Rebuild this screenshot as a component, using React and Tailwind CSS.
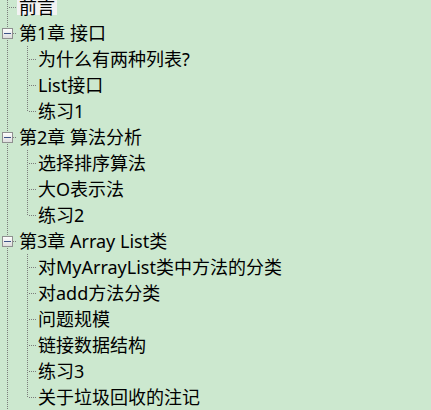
import React from 'react';

const rows = [
  { level: 1, label: '前言', selected: true },
  { level: 1, label: '第1章 接口', open: true },
  { level: 2, label: '为什么有两种列表?' },
  { level: 2, label: 'List接口' },
  { level: 2, label: '练习1', last: true },
  { level: 1, label: '第2章 算法分析', open: true },
  { level: 2, label: '选择排序算法' },
  { level: 2, label: '大O表示法' },
  { level: 2, label: '练习2', last: true },
  { level: 1, label: '第3章 Array List类', open: true },
  { level: 2, label: '对MyArrayList类中方法的分类' },
  { level: 2, label: '对add方法分类' },
  { level: 2, label: '问题规模' },
  { level: 2, label: '链接数据结构' },
  { level: 2, label: '练习3' },
  { level: 2, label: '关于垃圾回收的注记', last: true },
];

const dot = { stroke: '#7c7c7c', strokeWidth: 1, strokeDasharray: '1 1' };

// dotted guides for a top level node, with the expand box when it has children
const RootGuide = ({ open }) => (
  <svg width="17" height="26" className="shrink-0">
    <line x1="7.5" y1="0" x2="7.5" y2="26" {...dot} />
    <line x1="9" y1="13.5" x2="17" y2="13.5" {...dot} />
    {open && (
      <g>
        <defs>
          <linearGradient id="boxfill" x1="0" y1="0" x2="0" y2="1">
            <stop offset="0" stopColor="#ffffff" />
            <stop offset="1" stopColor="#dcdcdc" />
          </linearGradient>
        </defs>
        <rect x="2.5" y="8.5" width="10" height="10" fill="url(#boxfill)" stroke="#8f9090" />
        <line x1="4" y1="13.5" x2="11" y2="13.5" stroke="#3c5488" strokeWidth="1" />
      </g>
    )}
  </svg>
);

const ChildGuide = ({ last }) => (
  <svg width="37" height="26" className="shrink-0">
    <line x1="7.5" y1="0" x2="7.5" y2="26" {...dot} />
    <line x1="27.5" y1="0" x2="27.5" y2={last ? 14 : 26} {...dot} />
    <line x1="29" y1="13.5" x2="37" y2="13.5" {...dot} />
  </svg>
);

const Row = ({ row }) => (
  <div className="flex h-[26px] items-center">
    {row.level === 1 ? <RootGuide open={row.open} /> : <ChildGuide last={row.last} />}
    <span
      className={
        'whitespace-nowrap px-[2px] text-[18px] leading-[16px] h-[16px] flex items-center text-black ' +
        (row.level === 2 ? 'ml-[-1px] ' : '') +
        (row.selected ? 'bg-[#f2f2f2]' : '')
      }
    >
      {row.label}
    </span>
  </div>
);

export default function App() {
  return (
    <div
      className="w-[431px] h-[410px] overflow-hidden bg-[#cce8cf]"
      style={{ fontFamily: '"Noto Sans", "Noto Sans CJK SC", sans-serif' }}
    >
      <div className="-mt-[6px] flex flex-col">
        {rows.map((r, i) => (
          <Row key={i} row={r} />
        ))}
      </div>
    </div>
  );
}
